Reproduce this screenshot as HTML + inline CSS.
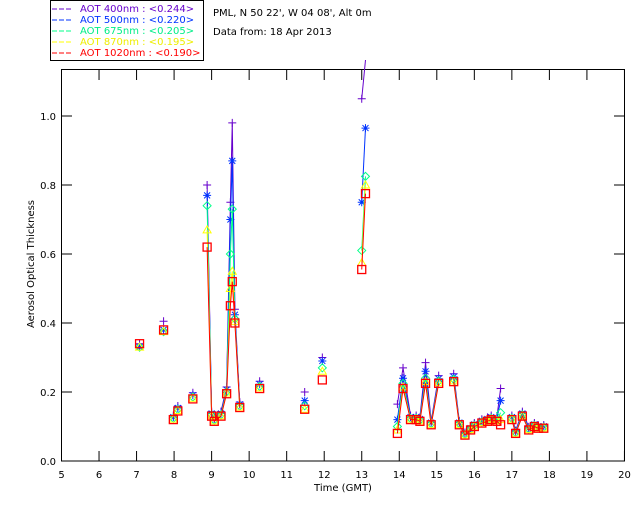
<!DOCTYPE html>
<html><head><meta charset="utf-8"><style>
body{margin:0;background:#fff;width:640px;height:512px;overflow:hidden;font-family:"DejaVu Sans","Liberation Sans",sans-serif;}
text{font-family:"DejaVu Sans","Liberation Sans",sans-serif;font-size:10px}
</style></head><body>
<svg id="s" width="640" height="512" xmlns="http://www.w3.org/2000/svg">
<rect x="50.5" y="0.5" width="153" height="60" fill="#fff" stroke="#000" stroke-width="1"/>
<g font-size="10">
<line x1="52" y1="9" x2="72" y2="9" stroke="#6600cc" stroke-dasharray="5,2"/><text x="80" y="12" fill="#6600cc">AOT  400nm : &lt;0.244&gt;</text>
<line x1="52" y1="20" x2="72" y2="20" stroke="#0033ff" stroke-dasharray="5,2"/><text x="80" y="23" fill="#0033ff">AOT  500nm : &lt;0.220&gt;</text>
<line x1="52" y1="31" x2="72" y2="31" stroke="#00ff88" stroke-dasharray="5,2"/><text x="80" y="34" fill="#00ee88">AOT  675nm : &lt;0.205&gt;</text>
<line x1="52" y1="42" x2="72" y2="42" stroke="#ffff00" stroke-dasharray="5,2"/><text x="80" y="45" fill="#eeee00">AOT  870nm : &lt;0.195&gt;</text>
<line x1="52" y1="53" x2="72" y2="53" stroke="#ff0000" stroke-dasharray="5,2"/><text x="80" y="56" fill="#ff0000">AOT 1020nm : &lt;0.190&gt;</text>
</g>
<text x="213" y="16">PML, N 50 22', W 04 08', Alt 0m</text>
<text x="213" y="35">Data from: 18 Apr 2013</text>
<rect x="61.5" y="69.5" width="563" height="391.5" fill="none" stroke="#000"/>
<text transform="translate(34,264) rotate(-90)" text-anchor="middle" font-size="9">Aerosol Optical Thickness</text>
<text x="343" y="491" text-anchor="middle">Time (GMT)</text>
<g id="ax"></g>
<g id="data"></g>
</svg>
<script>
var NS="http://www.w3.org/2000/svg",ax=document.getElementById('ax'),dg=document.getElementById('data');
function X(t){return 61.5+(t-5)*37.53}function Y(v){return 461-v*345}
function el(n,a,p){var e=document.createElementNS(NS,n);for(var k in a)e.setAttribute(k,a[k]);(p||ax).appendChild(e);return e}
for(var h=5;h<=20;h++){var x=X(h);el('line',{x1:x,y1:461,x2:x,y2:451,stroke:'#000'});el('line',{x1:x,y1:70,x2:x,y2:80,stroke:'#000'});var t=el('text',{x:x,y:478,'text-anchor':'middle'});t.textContent=h;}
for(var i=0;i<=5;i++){var v=i*0.2,y=Y(v);el('line',{x1:62,y1:y,x2:72,y2:y,stroke:'#000'});el('line',{x1:614,y1:y,x2:624,y2:y,stroke:'#000'});var t=el('text',{x:56,y:y+4,'text-anchor':'end'});t.textContent=v.toFixed(1);}
var red=[[[7.08,.34]],[[7.72,.38]],[[7.98,.12]],[[8.1,.145]],[[8.5,.18]],
[[8.88,.62],[9.0,.13],[9.07,.115],[9.25,.13],[9.4,.195],[9.5,.45],[9.55,.52],[9.62,.4],[9.75,.155]],
[[10.28,.21]],[[11.48,.15]],[[11.95,.235]],[[13.0,.555],[13.1,.775]],
[[13.95,.08],[14.1,.21],[14.3,.12],[14.45,.12],[14.55,.115],[14.7,.225],[14.85,.105],[15.05,.225]],
[[15.45,.23],[15.6,.105],[15.75,.075],[15.9,.09],[16.0,.1],[16.2,.11],[16.35,.115],[16.45,.12],[16.6,.115],[16.7,.105]],
[[17.0,.12],[17.1,.08],[17.28,.13],[17.45,.09],[17.6,.1],[17.7,.095],[17.85,.095]]];
var ov={'8.88':[.80,.77,.74,.67],'9.55':[.98,.87,.73,.55],'9.5':[.75,.7,.6,.5],'13':[1.05,.75,.61,.575],'13.1':[1.2,.965,.825,.8],
'16.7':[.21,.175,.14,.12],'11.48':[.2,.175,.16,.15],'11.95':[.3,.29,.27,.26],'7.72':[.405,.38,.375,.375],'7.08':[.34,.33,.33,.33],
'14.1':[.27,.24,.225,.215],'14.7':[.285,.26,.24,.23],'13.95':[.165,.12,.1,.09]};
var ser=[['#6600cc','+',1.1],['#0033ff','*',1.06],['#00ff88','d',1.03],['#ffff00','t',1.01],['#ff0000','s',1]];
ser.forEach(function(s,si){red.forEach(function(seg){var pts=seg.map(function(p){var v=p[1]*s[2];var o=ov[String(p[0])];if(o&&si<4)v=o[si];return [X(p[0]),Math.max(60,Y(v))]});
if(pts.length>1)el('polyline',{points:pts.map(function(p){return p.join(',')}).join(' '),fill:'none',stroke:s[0],'stroke-width':1},dg);
pts.forEach(function(p){var x=p[0],y=p[1],c=s[0];if(y<70)return;
if(s[1]=='+'){el('path',{d:'M'+(x-4)+' '+y+'h8M'+x+' '+(y-4)+'v8',stroke:c,fill:'none'},dg)}
else if(s[1]=='*'){el('path',{d:'M'+(x-4)+' '+y+'h8M'+x+' '+(y-4)+'v8M'+(x-3)+' '+(y-3)+'l6 6M'+(x+3)+' '+(y-3)+'l-6 6',stroke:c,fill:'none'},dg)}
else if(s[1]=='d'){el('path',{d:'M'+x+' '+(y-4)+'l4 4l-4 4l-4 -4z',stroke:c,fill:'none'},dg)}
else if(s[1]=='t'){el('path',{d:'M'+x+' '+(y-4)+'l4 7h-8z',stroke:c,fill:'none'},dg)}
else{el('rect',{x:x-4,y:y-4,width:8,height:8,stroke:c,fill:'none','stroke-width':1.3},dg)}});});});
</script>
</body></html>
